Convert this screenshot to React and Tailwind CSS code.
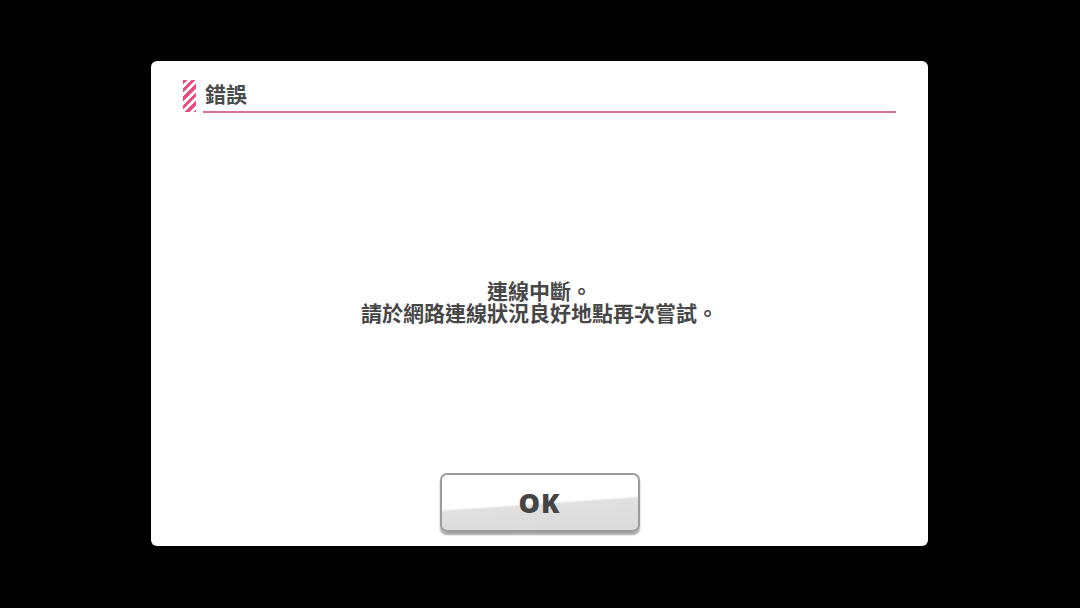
import React from 'react';

const font = { fontFamily: '"Noto Sans CJK TC", "Noto Sans", sans-serif' };

const App = () => {
  return (
    <div className="w-full h-[608px] bg-black flex items-center justify-center" style={font}>
      <div className="w-[777px] h-[485px] -ml-px -mt-px bg-white rounded-[6px] flex flex-col px-[32px]">
        {/* 標題列 */}
        <div className="flex items-stretch mt-[19px] h-[33px]">
          <div className="w-[13px] h-[32px] bg-[repeating-linear-gradient(135deg,#ee4a7e_0_3px,#ffffff_3px_6px)]" />
          <div className="flex-1 ml-[7px] border-b-2 border-[#d9729a] flex items-center">
            <span className="ml-[2px] -mt-[5px] text-[21px] font-bold text-[#4a4a4a] leading-none">錯誤</span>
          </div>
        </div>

        {/* 訊息 */}
        <div className="mt-[166px] text-center text-[21px] font-bold leading-[22px] text-[#474747]">
          <p>連線中斷。</p>
          <p>請於網路連線狀況良好地點再次嘗試。</p>
        </div>

        {/* 按鈕 */}
        <div className="mt-auto mb-[14px] flex justify-center">
          <button className="w-[200px] h-[59px] rounded-[7px] border-2 border-[#9b9b9b] bg-[linear-gradient(176deg,#ffffff_0%,#ffffff_50%,#e0e0e0_54%,#dadada_100%)] shadow-[0_3px_2px_rgba(0,0,0,0.35)] flex items-center justify-center">
            <span className="text-[27px] font-extrabold tracking-[1px] text-[#454545] leading-none" style={{ fontFamily: '"Open Sans", "Noto Sans", sans-serif' }}>OK</span>
          </button>
        </div>
      </div>
    </div>
  );
};

export default App;
